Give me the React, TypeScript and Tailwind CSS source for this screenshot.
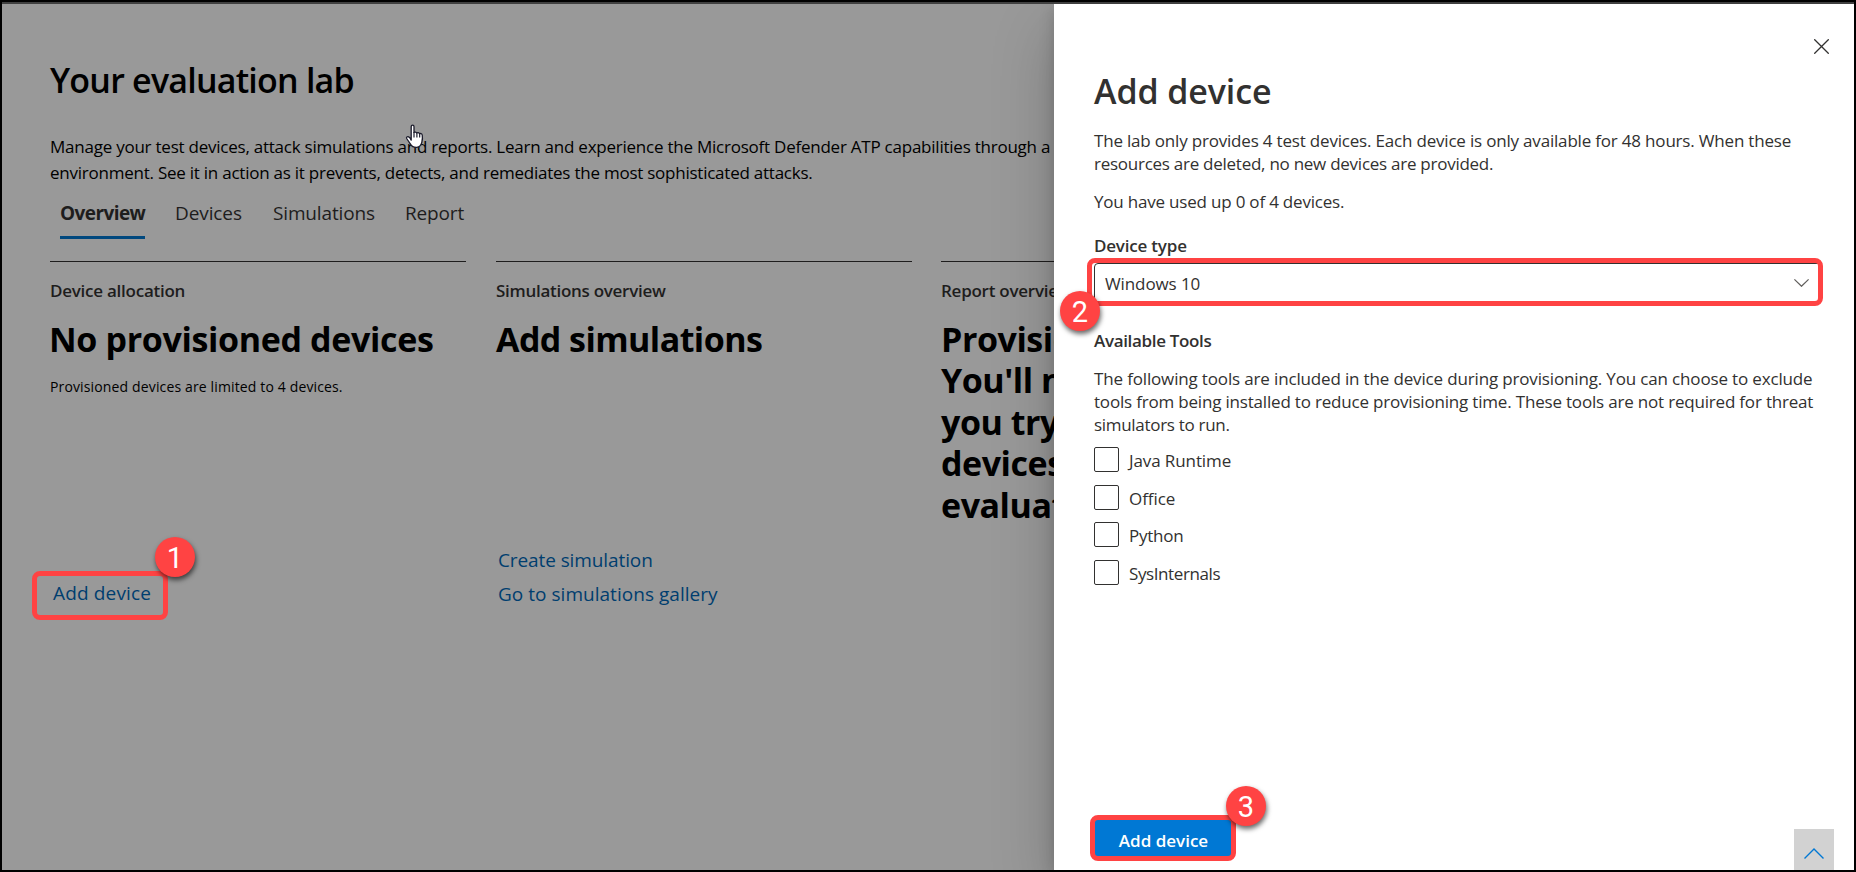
import type { ReactNode } from "react";

function Badge({ n, className }: { n: number; className: string }) {
  return (
    <span
      className={`absolute z-20 flex size-10 items-center justify-center rounded-full bg-[#ff4343] pt-0.5 font-['Roboto',sans-serif] text-[29px] leading-none font-normal tracking-normal text-white shadow-[1px_3px_5px_rgba(0,0,0,0.6)] ${className}`}
    >
      {n}
    </span>
  );
}

function Highlight({ className }: { className: string }) {
  return <span className={`pointer-events-none absolute z-10 rounded-lg border-[5px] border-[#ff4343] ${className}`} />;
}

function Column({ label, labelClass, children }: { label: string; labelClass: string; children: ReactNode }) {
  return (
    <section className="flex h-[350px] min-w-0 flex-col border-t border-[#1e1d1d] pt-[17px]">
      <h2 className={`text-[17px] leading-6 font-semibold text-[#1e1d1d] ${labelClass}`}>{label}</h2>
      {children}
    </section>
  );
}

const tools = [
  { name: "Java Runtime", tracking: "tracking-[-0.1px]" },
  { name: "Office", tracking: "tracking-[-0.05px]" },
  { name: "Python", tracking: "tracking-[-0.25px]" },
  { name: "SysInternals", tracking: "tracking-[-0.4px]" },
];

function LabPage() {
  return (
    <main className="min-w-0 flex-1 overflow-hidden bg-[#999999] pl-12 whitespace-nowrap text-black">
      <div className="relative pt-[53px]">
        <h1 className="text-[34px] leading-[46px] font-semibold tracking-[-0.78px]">Your evaluation lab</h1>
        <p className="mt-[31px] text-[17px] leading-[26px]">
          <span className="block tracking-[-0.235px]">
            Manage your test devices, attack simulations and reports. Learn and experience the Microsoft Defender ATP
            capabilities through a
          </span>
          <span className="block tracking-[-0.24px]">
            environment. See it in action as it prevents, detects, and remediates the most sophisticated attacks.
          </span>
        </p>
        <svg className="absolute top-[120px] left-[355px] h-[26px] w-[20px]" viewBox="0 0 20 26">
          <path
            d="M6.2 16.2V2.8c0-1 .6-1.6 1.4-1.6S9 1.8 9 2.8v5.6c.5-.6 2.4-.5 2.8.6.6-.6 2.3-.4 2.7.7.8-.5 2.5-.1 2.7 1.2.5 2.6.2 5.3-.4 7.5-.7 2.8-2.3 4.7-5 4.9-3.3.2-5.1-1.1-6.5-3.5L1.7 14.500c-.7-1.200.7-2.400 2-1.600.9.5 1.800 1.700 2.500 3.300z"
            fill="#fff"
            stroke="#1c1c2c"
            strokeWidth="1.3"
            strokeLinejoin="round"
          />
          <path d="M9 8v5.500M11.900 9v4.500M14.700 9.800v3.700" stroke="#1c1c2c" strokeWidth="1.2" fill="none" />
        </svg>
        <nav className="mt-[13px] ml-2.5 flex text-[19px] leading-7 text-[#1e1d1d]">
          <span className="mr-[30px] w-[85px] border-b-[3px] border-[#00487e] pb-[9px] font-bold tracking-[-0.58px]">
            Overview
          </span>
          <span className="mr-[32px] w-[66px] tracking-[-0.1px]">Devices</span>
          <span className="mr-[31px] w-[101px] tracking-[-0.15px]">Simulations</span>
          <span className="tracking-[-0.15px]">Report</span>
        </nav>
        <div className="mt-[22px] grid grid-cols-[416px_417px_416px] gap-x-[29px]">
          <Column label="Device allocation" labelClass="tracking-[-0.25px]">
            <h3 className="mt-4 -ml-px text-[34px] leading-[41.4px] font-bold tracking-[-0.35px]">No provisioned devices</h3>
            <p className="mt-[17px] text-[14px] leading-5 tracking-[0.14px]">Provisioned devices are limited to 4 devices.</p>
            <a className="relative mt-auto mb-px ml-[3px] w-[98px] text-[19px] leading-[34px] tracking-[0.15px] text-[#003e6f]">
              Add device
              <Highlight className="top-[-5px] left-[-21px] h-[49px] w-[136px]" />
              <Badge n={1} className="top-[-39px] left-[102px]" />
            </a>
          </Column>
          <div className="ml-px">
            <Column label="Simulations overview" labelClass="tracking-[-0.28px]">
              <h3 className="mt-4 text-[34px] leading-[41.4px] font-bold tracking-[-0.56px]">Add simulations</h3>
              <div className="mt-auto ml-0.5 flex flex-col text-[19px] leading-[34px] text-[#003e6f]">
                <a className="tracking-[-0.1px]">Create simulation</a>
                <a className="tracking-[0.03px]">Go to simulations gallery</a>
              </div>
            </Column>
          </div>
          <Column label="Report overview" labelClass="tracking-[-0.25px]">
            <h3 className="mt-4 text-[34px] leading-[41.4px] font-bold tracking-[-0.45px]">
              Provision
              <br />
              You'll need
              <br />
              you try
              <br />
              devices
              <br />
              evaluation
            </h3>
          </Column>
        </div>
      </div>
    </main>
  );
}

function DevicePanel() {
  return (
    <aside className="z-10 flex w-[800px] shrink-0 flex-col bg-white pt-[34.5px] pl-10 text-[17px] leading-[23px] whitespace-nowrap text-[#323130] shadow-[0_26px_58px_rgba(0,0,0,0.22),0_5px_14px_rgba(0,0,0,0.18)]">
      <button className="mr-[25px] self-end" aria-label="Close">
        <svg className="block size-[15px]" viewBox="0 0 15 15" stroke="#323130" strokeWidth="1.3" fill="none">
          <path d="M.3.3l14.400 14.400M14.700.3L.3 14.700" />
        </svg>
      </button>
      <h1 className="mt-[14.5px] text-[34px] leading-[46px] font-semibold tracking-[-0.1px]">Add device</h1>
      <p className="mt-[15px]">
        <span className="block tracking-[-0.19px]">
          The lab only provides 4 test devices. Each device is only available for 48 hours. When these
        </span>
        <span className="block tracking-[-0.26px]">resources are deleted, no new devices are provided.</span>
      </p>
      <p className="mt-[15px] tracking-[-0.2px]">You have used up 0 of 4 devices.</p>
      <h2 className="mt-[21px] font-semibold tracking-[-0.2px]">Device type</h2>
      <div className="relative mt-1.5 mr-8 flex h-10 items-center justify-between rounded-sm border border-[#323130] pr-[12px] pl-2.5">
        <span className="tracking-[-0.1px]">Windows 10</span>
        <svg className="h-2 w-[15px]" viewBox="0 0 15 8" stroke="#605e5c" strokeWidth="1.2" fill="none">
          <path d="M.4.4l7.100 6.900L14.600.4" />
        </svg>
        <Highlight className="top-[-6px] left-[-8px] h-12 w-[736px]" />
        <Badge n={2} className="top-[27px] left-[-35px]" />
      </div>
      <h2 className="mt-[26px] font-semibold tracking-[-0.33px]">Available Tools</h2>
      <p className="mt-[15px]">
        <span className="block tracking-[-0.155px]">
          The following tools are included in the device during provisioning. You can choose to exclude
        </span>
        <span className="block tracking-[-0.19px]">
          tools from being installed to reduce provisioning time. These tools are not required for threat
        </span>
        <span className="block tracking-[-0.3px]">simulators to run.</span>
      </p>
      <ul className="mt-[11px] flex flex-col gap-[12.67px]">
        {tools.map((t) => (
          <li key={t.name} className="flex h-[25px] items-center gap-2.5">
            <span className="size-[25px] rounded-xs border border-[#323130]" />
            <span className={`pt-0.5 ${t.tracking}`}>{t.name}</span>
          </li>
        ))}
      </ul>
      <div className="mt-auto flex h-[51px] items-start justify-between pr-5">
        <button className="relative h-[38px] w-[139px] bg-[#0078d4] pt-[5px] font-semibold text-white">
          Add device
          <Highlight className="top-[-4px] left-[-4px] h-[46px] w-[146px]" />
          <Badge n={3} className="top-[-33px] left-[132px]" />
        </button>
        <button className="flex h-[41px] w-10 items-center justify-center self-end bg-[#d2d2d2] pt-2" aria-label="Back to top">
          <svg className="h-[11px] w-5" viewBox="0 0 20 11" stroke="#0078d4" strokeWidth="1.4" fill="none">
            <path d="M.5 10.500L10 1l9.500 9.500" />
          </svg>
        </button>
      </div>
    </aside>
  );
}

export default function App() {
  return (
    <div className="flex h-[872px] w-[1856px] flex-col overflow-hidden border-2 border-black bg-black font-['Open_Sans','Noto_Sans',sans-serif]">
      <div className="h-0.5 shrink-0 bg-[#404040]" />
      <div className="flex min-h-0 flex-1 overflow-hidden">
        <LabPage />
        <DevicePanel />
      </div>
    </div>
  );
}
